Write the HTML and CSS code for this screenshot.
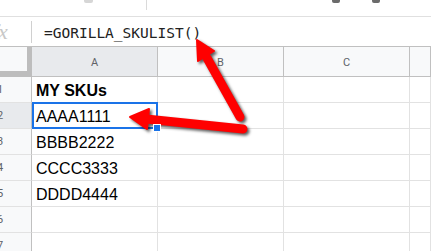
FILE: index.html
```html
<!DOCTYPE html>
<html lang="en">
<head>
  <meta charset="UTF-8">
  <meta name="viewport" content="width=device-width, initial-scale=1.0">
  <title>Sheet</title>
  <link rel="stylesheet" href="styles.css">
</head>
<body>

  <!-- Barre d'outils (coupée en haut) -->
  <div class="toolbar">
    <span class="tool-bit bit-a"></span>
    <span class="tool-sep"></span>
    <span class="tool-bit bit-undo"></span>
    <span class="tool-bit bit-redo"></span>
  </div>

  <!-- Barre de formule -->
  <div class="formula-bar">
    <span class="fx">fx</span>
    <span class="fx-sep"></span>
    <span class="formula">=GORILLA_SKULIST()</span>
  </div>

  <!-- Grille -->
  <div class="sheet">
    <div class="corner"></div>
    <div class="col-head active">A</div>
    <div class="col-head">B</div>
    <div class="col-head">C</div>
    <div class="col-head"></div>

    <div class="row-head"><span>1</span></div>
    <div class="cell bold">MY SKUs</div>
    <div class="cell"></div><div class="cell"></div><div class="cell"></div>

    <div class="row-head active"><span>2</span></div>
    <div class="cell selected">AAAA1111<span class="handle"></span></div>
    <div class="cell"></div><div class="cell"></div><div class="cell"></div>

    <div class="row-head"><span>3</span></div>
    <div class="cell">BBBB2222</div>
    <div class="cell"></div><div class="cell"></div><div class="cell"></div>

    <div class="row-head"><span>4</span></div>
    <div class="cell">CCCC3333</div>
    <div class="cell"></div><div class="cell"></div><div class="cell"></div>

    <div class="row-head"><span>5</span></div>
    <div class="cell">DDDD4444</div>
    <div class="cell"></div><div class="cell"></div><div class="cell"></div>

    <div class="row-head"><span>6</span></div>
    <div class="cell"></div><div class="cell"></div><div class="cell"></div><div class="cell"></div>

    <div class="row-head"><span>7</span></div>
    <div class="cell"></div><div class="cell"></div><div class="cell"></div><div class="cell"></div>
  </div>

  <!-- Flèches d'annotation -->
  <svg class="arrows" width="431" height="251" viewBox="0 0 431 251">
    <g fill="#ff0000" stroke="#ff0000" stroke-linecap="round" stroke-linejoin="round">
      <line x1="240" y1="117" x2="207" y2="58" stroke-width="9"/>
      <polygon points="197,40 214,51 198,61" stroke-width="2"/>
      <line x1="243" y1="129" x2="146" y2="119" stroke-width="9"/>
      <polygon points="130,117 149,109 147,129" stroke-width="2"/>
    </g>
  </svg>

</body>
</html>
```

FILE: styles.css
```css
/* Page */
body {
  margin: 0;
  width: 431px;
  height: 251px;
  overflow: hidden;
  background: #fff;
  font-family: "Liberation Sans", Arial, sans-serif;
  position: relative;
}

/* Barre d'outils */
.toolbar {
  height: 16px;
  border-bottom: 1px solid #e0e0e0;
  display: flex;
  align-items: flex-start;
}

.tool-bit {
  display: block;
  height: 3px;
  background: #6b6b6b;
  border-radius: 0 0 2px 2px;
}

.bit-a {
  width: 9px;
  margin-left: 84px;
  background: #d6d6d6;
}

.tool-sep {
  width: 1px;
  height: 10px;
  background: #dadada;
  margin-left: 53px;
}

.bit-undo {
  width: 8px;
  margin-left: 185px;
}

.bit-redo {
  width: 8px;
  margin-left: 32px;
}

/* Barre de formule */
.formula-bar {
  height: 29px;
  display: flex;
  align-items: center;
}

.fx {
  width: 31px;
  margin-left: -8px;
  font-family: "Liberation Serif", serif;
  font-style: italic;
  font-size: 22px;
  color: #c8c8c8;
}

.fx-sep {
  width: 1px;
  height: 22px;
  background: #d0d0d0;
  margin-left: 8px;
}

.formula {
  margin-left: 12px;
  font-family: "DejaVu Sans Mono", monospace;
  font-size: 14.5px;
  color: #222;
  padding-top: 2px;
}

/* Grille */
.sheet {
  display: grid;
  grid-template-columns: 32px 126px 126px 126px 1fr;
  grid-template-rows: 30px repeat(7, 26px);
  border-top: 1px solid #c0c0c0;
}

.sheet > div {
  box-sizing: border-box;
}

.corner {
  background: #f8f9fa;
  border-right: 5px solid #bdbdbd;
  border-bottom: 6px solid #bdbdbd;
}

.col-head {
  background: #f8f9fa;
  border-right: 1px solid #c0c0c0;
  border-bottom: 1px solid #c0c0c0;
  display: flex;
  align-items: center;
  justify-content: center;
  font-family: "Roboto", sans-serif;
  font-size: 11px;
  color: #5f6368;
  padding-top: 1px;
}

.row-head {
  background: #f8f9fa;
  border-right: 1px solid #c0c0c0;
  border-bottom: 1px solid #e2e2e2;
  display: flex;
  align-items: center;
  font-family: "Roboto", sans-serif;
  font-size: 11px;
  color: #5f6368;
}

.row-head span {
  margin-left: -3px;
}

.active {
  background: #e8eaed;
}

.cell {
  border-right: 1px solid #e2e2e2;
  border-bottom: 1px solid #e2e2e2;
  display: flex;
  align-items: flex-end;
  padding: 0 0 2px 4px;
  font-size: 16px;
  color: #000;
  position: relative;
}

.bold {
  font-weight: bold;
}

/* Cellule sélectionnée */
.selected::after {
  content: "";
  position: absolute;
  left: 0;
  top: -1px;
  right: -1px;
  bottom: -1px;
  border: 2px solid #1a73e8;
}

.handle {
  position: absolute;
  right: -4px;
  bottom: -4px;
  width: 6px;
  height: 6px;
  background: #1a73e8;
  border: 1px solid #fff;
  z-index: 2;
}

/* Flèches */
.arrows {
  position: absolute;
  left: 0;
  top: 0;
  pointer-events: none;
  filter: drop-shadow(2px 2px 1.5px rgba(0, 0, 0, 0.65));
}
```
